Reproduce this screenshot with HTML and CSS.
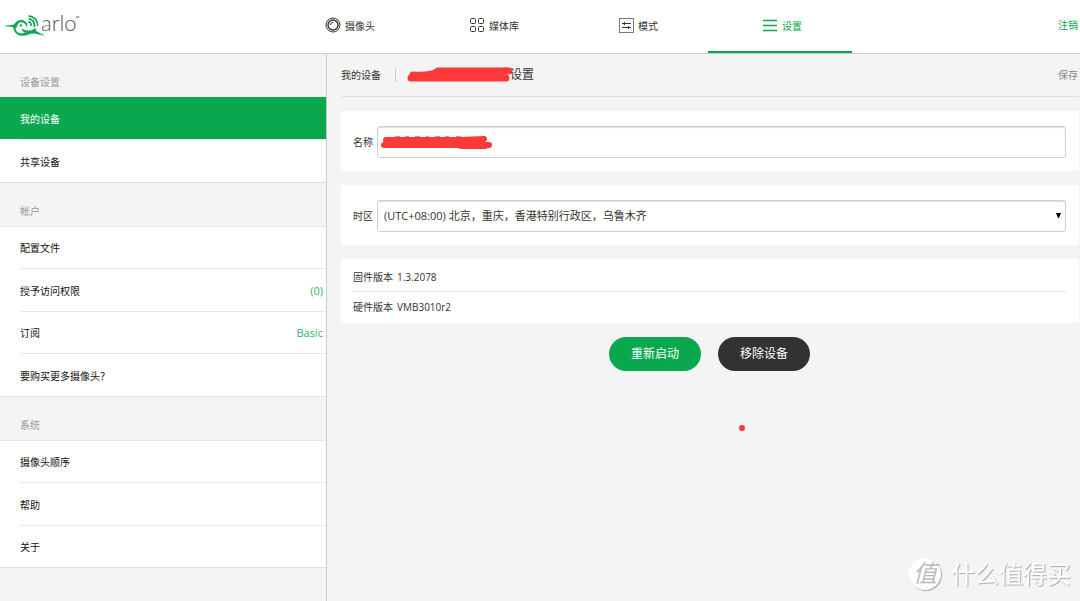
FILE: index.html
```html
<!DOCTYPE html>
<html lang="zh-CN">
<head>
<meta charset="utf-8">
<meta name="viewport" content="width=device-width, initial-scale=1">
<title>Arlo 设置</title>
<link rel="stylesheet" href="styles.css">
</head>
<body>
<header class="topbar">
  <a class="logo" href="#" aria-label="arlo">
    <svg class="logo-bird" viewBox="15 40 120 66" aria-hidden="true">
      <path d="M15 76 L42 72 Q50 59 64 58 Q75 59 82 70 Q80 76 81 80 Q76 65 64 64 Q53 65 51 76 Q51 81 46 83 Q47 95 59 98 Q67 99 76 96 Q64 91 66 85 Q82 94 100 87 Q103 85 105 82 Q110 88 107 91 L132 104 L102 98 Q90 99 80 103 Q66 107 54 102 Q41 95 40 79 Z" fill="#09a84e" stroke="#09a84e" stroke-width="1"/>
      <circle cx="63" cy="74" r="3.500" fill="#09a84e"/>
      <path d="M85 63 Q94 65 93 76 M86 54 Q106 58 103 79 M85 46 Q99 47 107 56 Q114 66 113 76" fill="none" stroke="#09a84e" stroke-width="5"/>
    </svg>
    <span class="logo-name">arlo</span><span class="logo-tm">™</span>
  </a>
  <nav class="tabs">
    <a class="tab" href="#">
      <svg class="tab-icon" viewBox="0 0 16 16" fill="none" stroke="#333"><circle cx="8" cy="8" r="7"/><circle cx="8" cy="8" r="5" stroke-width="1.4"/><path d="M5.4 8A2.7 2.7 0 0 1 8 5.4"/></svg>
      摄像头
    </a>
    <a class="tab" href="#">
      <svg class="tab-icon" viewBox="0 0 16 16" fill="none" stroke="#333"><rect x="1.5" y="1.5" width="5" height="5" rx="1"/><rect x="9.500" y="1.5" width="5" height="5" rx="1"/><rect x="1.5" y="9.500" width="5" height="5" rx="1"/><rect x="9.500" y="9.500" width="5" height="5" rx="1"/></svg>
      媒体库
    </a>
    <a class="tab" href="#">
      <svg class="tab-icon" viewBox="0 0 16 16" fill="none" stroke="#333"><rect x="1.5" y="1.5" width="14" height="14" stroke="#777"/><path d="M4 6.500h9M4 10.500h9"/><path d="M7 4.500v4L5 6.500zM10 8.500v4l2-2z" fill="#333" stroke="none"/></svg>
      模式
    </a>
    <a class="tab tab-current" href="#" aria-current="page">
      <svg class="tab-icon" viewBox="0 0 16 16" fill="none" stroke="#09a84e" stroke-width="1.400"><path d="M1 3.500h14M1 8.500h14M1 13.500h14"/></svg>
      设置
    </a>
  </nav>
  <a class="logout" href="#">注销</a>
</header>
<div class="layout">
  <aside class="sidebar">
    <h2 class="group-title">设备设置</h2>
    <ul class="group">
      <li class="item item-active"><a class="item-link" href="#">我的设备</a></li>
      <li class="item"><a class="item-link" href="#">共享设备</a></li>
    </ul>
    <h2 class="group-title">帐户</h2>
    <ul class="group">
      <li class="item"><a class="item-link" href="#">配置文件</a></li>
      <li class="item"><a class="item-link" href="#">授予访问权限<span class="item-value">(0)</span></a></li>
      <li class="item"><a class="item-link" href="#">订阅<span class="item-value">Basic</span></a></li>
      <li class="item"><a class="item-link" href="#">要购买更多摄像头？</a></li>
    </ul>
    <h2 class="group-title">系统</h2>
    <ul class="group">
      <li class="item"><a class="item-link" href="#">摄像头顺序</a></li>
      <li class="item"><a class="item-link" href="#">帮助</a></li>
      <li class="item"><a class="item-link" href="#">关于</a></li>
    </ul>
  </aside>
  <main class="content">
    <div class="crumbs">
      <a class="crumb-back" href="#">我的设备</a>
      <h1 class="crumb-title">
        <svg class="scribble-title" viewBox="0 0 106 16" aria-hidden="true"><path d="M4 11H99M6 8Q26 9 31 4H100M28 6L102 4M28 8H97" fill="none" stroke="#fd3838" stroke-width="7" stroke-linecap="round"/></svg>设置
      </h1>
      <button class="save" type="button">保存</button>
    </div>
    <form class="cards">
      <div class="card field">
        <label class="field-label" for="name">名称</label>
        <div class="control">
          <input class="box" id="name" type="text">
          <svg class="scribble-name" viewBox="0 0 112 14" aria-hidden="true"><path d="M14 1h5m5 0h4m6 0h5m6 0h3m6 0h5m5 0h4m7 0h5" stroke="#7c3030" stroke-width="1"/><path d="M5 4H80L103 3M3 9H108M80 10H104M5 7H90" fill="none" stroke="#fd3838" stroke-width="6" stroke-linecap="round"/></svg>
        </div>
      </div>
      <div class="card field">
        <label class="field-label" for="zone">时区</label>
        <div class="control">
          <select class="box" id="zone"><option>(UTC+08:00) 北京，重庆，香港特别行政区，乌鲁木齐</option></select>
          <svg class="arrow" viewBox="0 0 5 5" aria-hidden="true"><path d="M0 0h5L3 5H2z"/></svg>
        </div>
      </div>
      <dl class="card versions">
        <div class="version"><dt>固件版本</dt><dd>1.3.2078</dd></div>
        <div class="version"><dt>硬件版本</dt><dd>VMB3010r2</dd></div>
      </dl>
      <div class="actions">
        <button class="pill pill-green" type="button">重新启动</button>
        <button class="pill pill-dark" type="button">移除设备</button>
      </div>
    </form>
    <span class="dot"></span>
  </main>
</div>
<div class="watermark"><span class="mark-badge">值</span><span>什么值得买</span></div>
</body>
</html>
```
FILE: styles.css
```css
* { box-sizing: border-box; }
body {
  margin: 0;
  min-height: 100vh;
  display: flex;
  flex-direction: column;
  background: #f4f4f4;
  color: #333;
  font: 10px/16px "Open Sans", "Noto Sans CJK SC", sans-serif;
}
a { color: inherit; text-decoration: none; }
h1, h2, ul, dl, dd { margin: 0; padding: 0; font-weight: 400; }
ul { list-style: none; }
button, input, select { font: inherit; color: inherit; }

/* Top bar */
.topbar {
  display: grid;
  grid-template-columns: 23fr 48fr 19fr;
  background: #fff;
  border-bottom: 1px solid #ccc;
}
.logo { display: flex; align-items: center; height: 48px; padding-left: 5px; }
.logo-bird { width: 40px; height: 22px; margin-top: 2px; }
.logo-name { margin-left: -4px; color: #555; font: 300 22px/24px Lato, sans-serif; padding-bottom: 3px; }
.logo-tm { align-self: flex-start; margin-left: -1px; padding-top: 12px; font-size: 5px; line-height: 12px; }
.tabs { display: grid; grid-template-columns: repeat(4, 1fr); height: 53px; }
.tab {
  display: flex;
  align-items: center;
  justify-content: center;
  gap: 4px;
  padding-left: 4px;
  border-bottom: 2px solid transparent;
}
.tab-icon { width: 16px; height: 16px; margin-bottom: 2px; }
.tab-current { color: #09a84e; border-color: #09a84e; }
.logout { justify-self: end; padding: 17px 2px 0 0; color: #09a84e; }

/* Sidebar */
.layout { flex: 1; display: grid; grid-template-columns: minmax(200px, 327px) 1fr; }
.sidebar { border-right: 1px solid #ccc; }
.group-title {
  height: 43px;
  padding: 20px 20px 0;
  color: #999;
  font-size: 10px;
}
.group { background: #fff; border-bottom: 1px solid #e0e0e0; color: #111; }
.item { display: flex; height: 42px; padding-left: 20px; }
.item:nth-child(even) { height: 43px; }
.item:first-child { border-top: 1px solid #e6e6e6; }
.item-link {
  flex: 1;
  display: flex;
  align-items: center;
  justify-content: space-between;
  padding: 1px 3px 0 0;
}
.item + .item .item-link { border-top: 1px solid #e8e8e8; }
.item-active { background: #09a84e; color: #fff; }
.item-active:first-child { border-top-color: #09a84e; }
.item-value { color: #35b36c; font-size: 11px; }

/* Content */
.content { min-width: 0; padding: 0 1px 0 14px; }
.crumbs {
  display: flex;
  align-items: center;
  height: 43px;
  border-bottom: 1px solid #e2e2e2;
}
.crumb-back { padding-right: 14px; border-right: 1px solid #ccc; line-height: 14px; }
.crumb-title { display: flex; align-items: center; margin-left: 11px; font-size: 12px; }
.scribble-title { width: 106px; height: 16px; margin-right: -3px; }
.save { margin-left: auto; padding: 0 1px 0 0; border: 0; background: none; color: #888; }
.cards { display: grid; gap: 14px; padding-top: 14px; }
.card { background: #fff; padding: 0 13px 0 12px; }
.field { display: flex; align-items: center; gap: 4px; height: 60px; padding-top: 2px; }
.control { position: relative; flex: 1; min-width: 0; }
.box {
  display: block;
  width: 100%;
  height: 32px;
  padding: 0 6px;
  border: 1px solid #d0d0cc;
  border-radius: 3px;
  background: #fff;
  box-shadow: inset 0 1px 1px #ddd;
  font-size: 11px;
  appearance: none;
}
.scribble-name { position: absolute; left: 4px; top: 10px; width: 112px; height: 14px; pointer-events: none; }
.arrow { position: absolute; right: 5px; top: 13px; width: 5px; height: 5px; pointer-events: none; }
.versions { padding-top: 4px; padding-bottom: 2px; }
.version { display: flex; align-items: center; gap: 4px; height: 29px; }
.version:first-child { border-bottom: 1px solid #e6e6e6; }
.actions { display: flex; justify-content: center; gap: 17px; padding-right: 1px; }
.pill {
  width: 92px;
  height: 34px;
  padding: 0;
  border: 0;
  border-radius: 17px;
  color: #fff;
  font-size: 12px;
}
.pill-green { background: #09a84e; }
.pill-dark { background: #323232; }
.dot {
  display: block;
  width: 6px;
  height: 6px;
  margin: 54px auto 0;
  border-radius: 50%;
  background: #fd3838;
  position: relative;
  left: 32px;
}

/* Watermark */
.watermark {
  position: fixed;
  right: 9px;
  bottom: 11px;
  display: flex;
  align-items: center;
  gap: 10px;
  color: #fff;
  font-size: 24px;
  line-height: 32px;
  text-shadow: 1px 1px 1px #aaa;
}
.mark-badge {
  width: 32px;
  height: 32px;
  border-radius: 50%;
  background: #fff;
  box-shadow: 1px 1px 1px #aaa;
  color: #bbb;
  font-size: 24px;
  font-style: italic;
  line-height: 30px;
  text-align: center;
  text-shadow: none;
}
```
